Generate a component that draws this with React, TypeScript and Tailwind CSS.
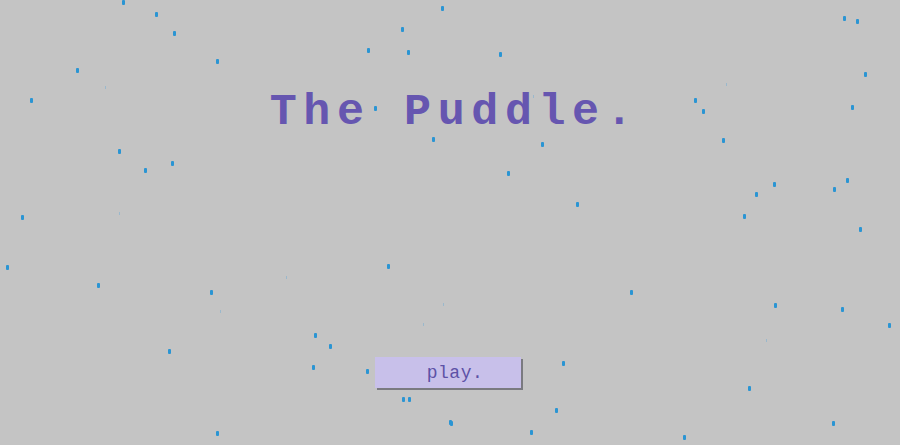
import React from "react";

// raindrops: [x, y, faint?]
const drops: [number, number, number][] = [
  [122, 0, 0], [155, 12, 0], [173, 31, 0], [216, 59, 0], [76, 68, 0], [30, 98, 0],
  [105, 86, 1], [118, 149, 0], [843, 16, 0], [856, 19, 0], [864, 72, 0], [851, 105, 0],
  [694, 98, 0], [702, 109, 0], [722, 138, 0], [726, 83, 1], [441, 6, 0], [401, 27, 0],
  [367, 48, 0], [407, 50, 0], [499, 52, 0], [374, 106, 0], [432, 137, 0], [541, 142, 0],
  [533, 95, 1], [144, 168, 0], [171, 161, 0], [21, 215, 0], [119, 212, 1], [6, 265, 0],
  [97, 283, 0], [210, 290, 0], [286, 276, 1], [387, 264, 0], [507, 171, 0], [576, 202, 0],
  [630, 290, 0], [755, 192, 0], [773, 182, 0], [743, 214, 0], [833, 187, 0], [846, 178, 0],
  [859, 227, 0], [443, 303, 1], [220, 310, 1], [423, 323, 1], [314, 333, 0], [329, 344, 0],
  [168, 349, 0], [312, 365, 0], [366, 369, 0], [402, 397, 0], [408, 397, 0], [216, 431, 0],
  [449, 420, 0], [774, 303, 0], [841, 307, 0], [888, 323, 0], [766, 339, 1], [562, 361, 0],
  [748, 386, 0], [555, 408, 0], [530, 430, 0], [683, 435, 0], [832, 421, 0], [450, 421, 0],
];

export default function App() {
  return (
    <div className="relative w-full h-[445px] overflow-hidden bg-[#c4c4c4] font-['Liberation_Mono',monospace]">
      {drops.map(([x, y, faint], i) => (
        <span
          key={i}
          className={
            faint
              ? "absolute w-px h-[3px] bg-[#9ab8cc]"
              : "absolute w-[3px] h-[5px] rounded-[1px] bg-[#2b95d3]"
          }
          style={{ left: x, top: y }}
        />
      ))}

      <div className="relative flex flex-col items-center pt-[90px]">
        <h1 className="text-[45px] leading-none font-bold tracking-[6.6px] text-[#6656b0] whitespace-pre ml-[9px]">
          The Puddle.
        </h1>
        <button className="mt-[222px] ml-[-4px] w-[146px] h-[31px] bg-[#c8c0ea] text-[#5d51a6] text-[18px] leading-none shadow-[2px_2px_0_#7a7a80] flex items-center justify-center pl-[14px] tracking-[0.5px]">
          play.
        </button>
      </div>
    </div>
  );
}
